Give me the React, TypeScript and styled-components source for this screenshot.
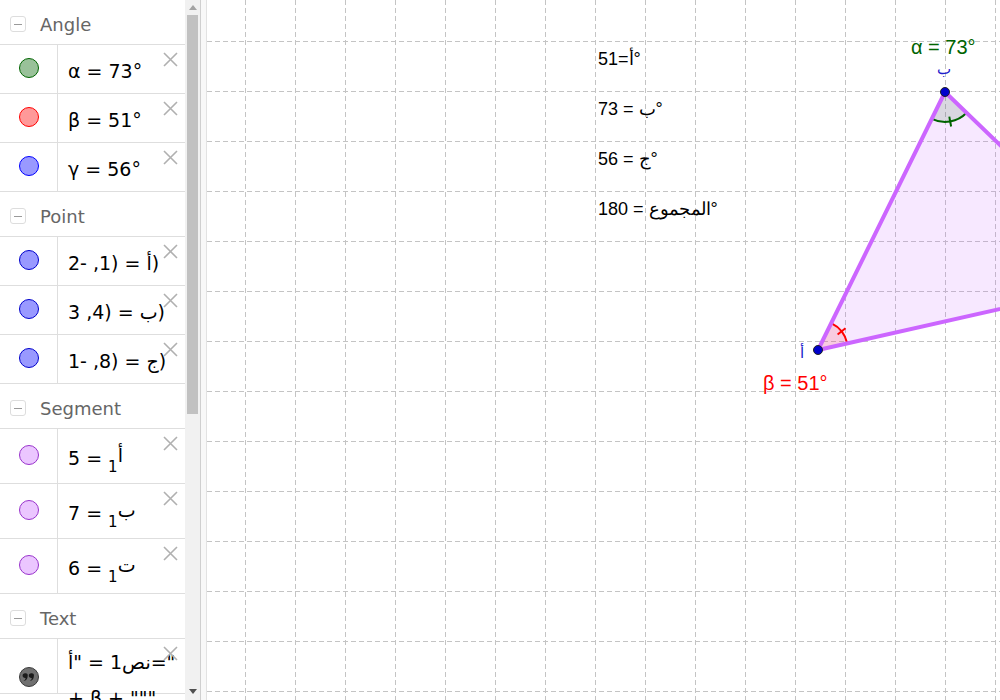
import React from 'react'
import styled, { createGlobalStyle } from 'styled-components'

const GlobalStyle = createGlobalStyle`
  html, body {
    margin: 0;
    padding: 0;
    background: #ffffff;
    overflow: hidden;
  }
  body {
    font-family: "DejaVu Sans", "Noto Sans", sans-serif;
  }
`

type Item = {
  fill: string
  stroke: string
  text: React.ReactNode
  kind?: 'dot' | 'quote'
}

type Group = {
  title: string
  tall?: boolean
  items: Item[]
}

// built lazily so the styled parts below are defined by then
const getGroups = (): Group[] => [
  {
    title: 'Angle',
    items: [
      { fill: '#99c199', stroke: '#006400', text: 'α = 73°' },
      { fill: '#ff9999', stroke: '#ff0000', text: 'β = 51°' },
      { fill: '#9999ff', stroke: '#0000ff', text: 'γ = 56°' },
    ],
  },
  {
    title: 'Point',
    items: [
      { fill: '#9999ff', stroke: '#0000cc', text: '2- ,1) = أ)' },
      { fill: '#9999ff', stroke: '#0000cc', text: '3 ,4) = ب)' },
      { fill: '#9999ff', stroke: '#0000cc', text: '1- ,8) = ج)' },
    ],
  },
  {
    title: 'Segment',
    tall: true,
    items: [
      { fill: '#ebc6ff', stroke: '#9933cc', text: <>5 = <Sub>1</Sub><Sup>أ</Sup></> },
      { fill: '#ebc6ff', stroke: '#9933cc', text: <>7 = <Sub>1</Sub><Sup>ب</Sup></> },
      { fill: '#ebc6ff', stroke: '#9933cc', text: <>6 = <Sub>1</Sub><Sup>ت</Sup></> },
    ],
  },
  {
    title: 'Text',
    tall: true,
    items: [
      {
        fill: '#666666',
        stroke: '#333333',
        kind: 'quote',
        text: (
          <>
            <Line>أ" = 1<bdi>نص</bdi>="</Line>
            <Line>+ β + """</Line>
          </>
        ),
      },
    ],
  },
]

const xs = Array.from({ length: 16 }, (_, i) => 245 + i * 50)
const ys = Array.from({ length: 14 }, (_, i) => 41 + i * 50)

const A = { x: 818, y: 350 }
const B = { x: 945, y: 92 }
const C = { x: 1138, y: 278 }

const CloseIcon = () => (
  <svg width="15" height="15" viewBox="0 0 15 15">
    <path d="M1 1 L14 14 M14 1 L1 14" stroke="#b0b0b0" strokeWidth="1.6" fill="none" />
  </svg>
)

const QuoteIcon = () => (
  <svg width="22" height="22" viewBox="0 0 22 22">
    <circle cx="11" cy="11" r="9.5" fill="#707070" stroke="#3a3a3a" strokeWidth="1" />
    <path d="M7.6 7.3 a2.4 2.4 0 1 0 0.1 4.6 q-0.2 2 -2.2 3.2 q4 -0.6 4.2 -5 a2.4 2.4 0 0 0 -2.1 -2.8 z" fill="#1a1a1a" />
    <path d="M13.8 7.3 a2.4 2.4 0 1 0 0.1 4.6 q-0.2 2 -2.2 3.2 q4 -0.6 4.2 -5 a2.4 2.4 0 0 0 -2.1 -2.8 z" fill="#1a1a1a" />
  </svg>
)

const App = () => {
  const groups = getGroups()
  return (
    <>
      <GlobalStyle />
      <Layout>
        <AlgebraPanel>
          {groups.map((g) => (
            <section key={g.title}>
              <GroupHeader>
                <CollapseBox>
                  <span />
                </CollapseBox>
                <HeaderLabel>{g.title}</HeaderLabel>
              </GroupHeader>
              {g.items.map((it, i) => (
                <ItemRow key={i} $tall={g.tall}>
                  <MarkerCell $quote={it.kind === 'quote'}>
                    {it.kind === 'quote' ? (
                      <QuoteIcon />
                    ) : (
                      <Marker $fill={it.fill} $stroke={it.stroke} />
                    )}
                  </MarkerCell>
                  {it.kind === 'quote' ? (
                    <TextBlock>{it.text}</TextBlock>
                  ) : (
                    <ItemText>
                      <Formula>{it.text}</Formula>
                    </ItemText>
                  )}
                  <CloseButton>
                    <CloseIcon />
                  </CloseButton>
                </ItemRow>
              ))}
            </section>
          ))}
        </AlgebraPanel>

        <ScrollTrack>
          <ArrowUp />
          <ScrollThumb />
          <ArrowDown />
        </ScrollTrack>

        <Splitter />

        <Canvas>
          <svg width="793" height="700" viewBox="207 0 793 700">
            <g stroke="#c4c4c4" strokeWidth="1" strokeDasharray="5 3">
              {xs.map((x) => (
                <line key={'v' + x} x1={x + 0.5} y1={0} x2={x + 0.5} y2={700} />
              ))}
              {ys.map((y) => (
                <line key={'h' + y} x1={207} y1={y + 0.5} x2={1000} y2={y + 0.5} />
              ))}
            </g>

            <polygon
              points={`${A.x},${A.y} ${B.x},${B.y} ${C.x},${C.y}`}
              fill="#cc66ff"
              fillOpacity="0.15"
            />

            {/* angle at A */}
            <path d="M818 350 L831.2 323.1 A30 30 0 0 1 847.3 343.4 Z" fill="#ff0000" fillOpacity="0.12" />
            <path d="M831.2 323.1 A30 30 0 0 1 847.3 343.4" fill="none" stroke="#ff0000" strokeWidth="2" />
            <line x1="837.6" y1="334.5" x2="845.5" y2="328.3" stroke="#ff0000" strokeWidth="2" />

            {/* angle at B */}
            <path d="M945 92 L966.6 112.8 A30 30 0 0 1 931.8 118.9 Z" fill="#006400" fillOpacity="0.12" />
            <path d="M966.6 112.8 A30 30 0 0 1 931.8 118.9" fill="none" stroke="#006400" strokeWidth="2" />
            <line x1="949.3" y1="116.6" x2="951.1" y2="126.5" stroke="#006400" strokeWidth="2" />

            <g stroke="#cc66ff" strokeWidth="4" strokeLinecap="round">
              <line x1={A.x} y1={A.y} x2={B.x} y2={B.y} />
              <line x1={B.x} y1={B.y} x2={C.x} y2={C.y} />
              <line x1={A.x} y1={A.y} x2={C.x} y2={C.y} />
            </g>

            <circle cx={A.x} cy={A.y} r="4.5" fill="#0000cc" stroke="#222" strokeWidth="1" />
            <circle cx={B.x} cy={B.y} r="4.5" fill="#0000cc" stroke="#222" strokeWidth="1" />

            <g fontFamily="'Liberation Sans', Arial, sans-serif">
              <text x="800" y="358" fontSize="15" fill="#2020cc">أ</text>
              <text x="944" y="74" fontSize="15" fill="#2020cc" textAnchor="middle">ب</text>
              <text x="763" y="390" fontSize="20" fill="#ff0000">β = 51°</text>
              <text x="911" y="54" fontSize="20" fill="#006400">α = 73°</text>

              <text x="598" y="65" fontSize="18" fill="#000">51=أ°</text>
              <text x="598" y="115" fontSize="18" fill="#000">73 = ب°</text>
              <text x="598" y="165" fontSize="18" fill="#000">56 = ج°</text>
              <text x="598" y="215" fontSize="18" fill="#000">180 = المجموع°</text>
            </g>
          </svg>
        </Canvas>
      </Layout>
    </>
  )
}

export default App

const Layout = styled.div`
  display: flex;
  width: 1000px;
  height: 700px;
  overflow: hidden;
`

const AlgebraPanel = styled.div`
  width: 185px;
  flex: none;
  height: 700px;
  overflow: hidden;
  background: #ffffff;
`

const GroupHeader = styled.div`
  height: 45px;
  display: flex;
  align-items: center;
  gap: 14px;
  padding-left: 10px;
  padding-top: 4px;
  box-sizing: border-box;
  border-bottom: 1px solid #dedede;
`

const CollapseBox = styled.div`
  width: 16px;
  height: 16px;
  box-sizing: border-box;
  border: 1px solid #dddddd;
  border-radius: 3px;
  display: flex;
  align-items: center;
  justify-content: center;

  span {
    width: 8px;
    height: 1px;
    background: #9a9a9a;
  }
`

const HeaderLabel = styled.span`
  font-size: 18px;
  color: #666666;
`

const ItemRow = styled.div<{ $tall?: boolean }>`
  position: relative;
  display: flex;
  height: ${(p) => (p.$tall ? 54 : 48)}px;
  border-bottom: 1px solid #dedede;
`

const MarkerCell = styled.div<{ $quote?: boolean }>`
  width: 57px;
  flex: none;
  border-right: 1px solid #dedede;
  display: flex;
  align-items: ${(p) => (p.$quote ? 'flex-start' : 'center')};
  padding-top: ${(p) => (p.$quote ? 27 : 0)}px;
  justify-content: center;
`

const Marker = styled.div<{ $fill: string; $stroke: string }>`
  width: 20px;
  height: 20px;
  box-sizing: border-box;
  border-radius: 50%;
  background: ${(p) => p.$fill};
  border: 1px solid ${(p) => p.$stroke};
  margin-left: 1px;
  margin-bottom: 2px;
`

const ItemText = styled.div`
  flex: 1;
  padding-left: 10px;
  padding-top: 4px;
  display: flex;
  align-items: center;
  font-size: 19px;
  color: #000000;
  white-space: nowrap;
`

const Formula = styled.span`
  direction: ltr;
  unicode-bidi: bidi-override;
`

const TextBlock = styled.div`
  flex: 1;
  padding-left: 10px;
  padding-top: 5px;
  font-size: 19px;
  color: #000000;
  white-space: nowrap;
`

const Line = styled.div`
  line-height: 36px;
  unicode-bidi: bidi-override;
  direction: ltr;
`

const Sub = styled.span`
  font-size: 15px;
  position: relative;
  top: 7px;
`

const Sup = styled.span`
  position: relative;
  top: -3px;
`

const CloseButton = styled.div`
  position: absolute;
  top: 7px;
  right: 7px;
  width: 15px;
  height: 15px;
`

const ScrollTrack = styled.div`
  width: 15px;
  flex: none;
  height: 700px;
  background: #f1f1f1;
  display: flex;
  flex-direction: column;
  align-items: center;
`

const ArrowUp = styled.div`
  width: 0;
  height: 0;
  margin-top: 5px;
  border-left: 4px solid transparent;
  border-right: 4px solid transparent;
  border-bottom: 5px solid #a3a3a3;
`

const ScrollThumb = styled.div`
  width: 11px;
  height: 399px;
  margin-top: 5px;
  background: #c1c1c1;
`

const ArrowDown = styled.div`
  width: 0;
  height: 0;
  margin-top: auto;
  margin-bottom: 6px;
  border-left: 4px solid transparent;
  border-right: 4px solid transparent;
  border-top: 5px solid #505050;
`

const Splitter = styled.div`
  width: 7px;
  flex: none;
  height: 700px;
  box-sizing: border-box;
  background: #f8f8f8;
  border-left: 1px solid #cfcfcf;
  border-right: 1px solid #e2e2e2;
`

const Canvas = styled.div`
  flex: 1;
  height: 700px;
  background: #ffffff;
  overflow: hidden;

  svg {
    display: block;
  }
`
